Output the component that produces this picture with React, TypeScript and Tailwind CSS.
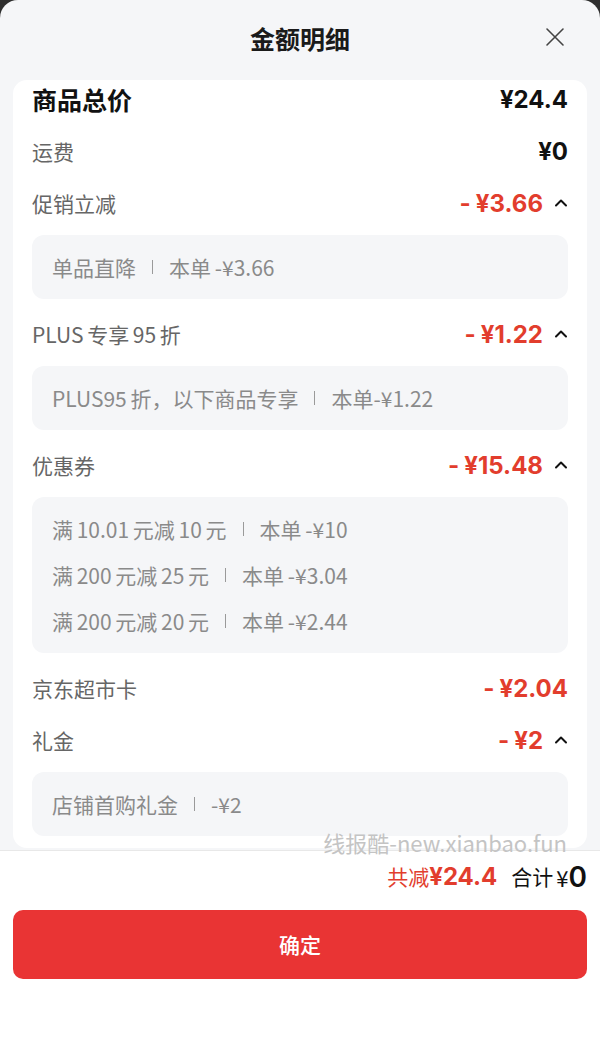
const font = { fontFamily: '"Noto Sans CJK SC", "Noto Sans", sans-serif' };

type Row = {
  label: string;
  amount: string;
  discount?: boolean;
  chevron?: boolean;
  details?: string[][];
};

const rows: Row[] = [
  { label: '运费', amount: '¥0' },
  { label: '促销立减', amount: '¥3.66', discount: true, chevron: true, details: [['单品直降', '本单 -¥3.66']] },
  {
    label: 'PLUS 专享 95 折',
    amount: '¥1.22',
    discount: true,
    chevron: true,
    details: [['PLUS95 折，以下商品专享', '本单-¥1.22']]
  },
  {
    label: '优惠券',
    amount: '¥15.48',
    discount: true,
    chevron: true,
    details: [
      ['满 10.01 元减 10 元', '本单 -¥10'],
      ['满 200 元减 25 元', '本单 -¥3.04'],
      ['满 200 元减 20 元', '本单 -¥2.44']
    ]
  },
  { label: '京东超市卡', amount: '¥2.04', discount: true },
  { label: '礼金', amount: '¥2', discount: true, chevron: true, details: [['店铺首购礼金', '-¥2']] }
];

const Chevron = () => (
  <svg width="14" height="9" viewBox="0 0 14 9" className="mb-[4px] ml-[11px]">
    <path d="M2 7.5 L7 2.5 L12 7.5" fill="none" stroke="#111" strokeWidth="2" strokeLinecap="round" strokeLinejoin="round" />
  </svg>
);

const Amount = ({ row }: { row: Row }) => (
  <div className="flex items-center">
    <span
      className={`text-[24px] font-bold ${row.discount ? 'text-[#e23d2d]' : 'text-[#111]'}`}
      style={{ fontFamily: 'Inter, "Noto Sans CJK SC", sans-serif' }}
    >
      {row.discount && <span className="mr-[5px]">-</span>}
      {row.amount}
    </span>
    {row.chevron && <Chevron />}
  </div>
);

const App = () => {
  return (
    <div className="h-[1037px] w-[600px] bg-[#2e2e2e]" style={font}>
      <div className="relative flex h-full flex-col overflow-hidden rounded-t-[18px] bg-[#f5f6f8]">
        <div className="relative flex h-[80px] shrink-0 items-center justify-center pb-[2px]">
          <h1 className="text-[25px] font-semibold text-[#1a1a1a]">金额明细</h1>
          <svg width="20" height="20" viewBox="0 0 20 20" className="absolute right-[35px] top-[27px]">
            <path d="M2 2 L18 18 M18 2 L2 18" stroke="#444" strokeWidth="1.6" strokeLinecap="round" />
          </svg>
        </div>

        <div className="mx-[13px] rounded-[14px] bg-white px-[19px] pb-[2px]">
          <div className="flex h-[46px] items-center justify-between pb-[6px]">
            <span className="text-[25px] font-bold text-[#111]">商品总价</span>
            <Amount row={{ label: '', amount: '¥24.4' }} />
          </div>

          {rows.map((row) => (
            <div key={row.label}>
              <div className="flex h-[52px] items-center justify-between">
                <span className="text-[21px] text-[#666] [word-spacing:-1px]">{row.label}</span>
                <Amount row={row} />
              </div>
              {row.details && (
                <div className="mb-[10px] mt-[5px] rounded-[12px] bg-[#f5f6f8] px-[20px] py-[9px]">
                  {row.details.map(([left, right]) => (
                    <div
                      key={left}
                      className="flex items-center text-[21px] leading-[46px] text-[#8a8a8a] [word-spacing:-1px]"
                    >
                      <span>{left}</span>
                      <span className="mx-[16px] inline-block h-[14px] w-px bg-[#9a9a9a]" />
                      <span>{right}</span>
                    </div>
                  ))}
                </div>
              )}
            </div>
          ))}
        </div>

        <div className="pointer-events-none absolute right-[33px] top-[826px] text-[22px] text-[#c4c4c4]">
          线报酷-new.xianbao.fun
        </div>

        <div className="mt-[2px] flex flex-1 flex-col border-t border-[#e8e8e8] bg-white px-[13px]">
          <div className="flex h-[52px] items-center justify-end">
            <span className="text-[21px] text-[#e23d2d]">共减</span>
            <span className="text-[24px] font-bold text-[#e23d2d]" style={{ fontFamily: 'Inter, sans-serif' }}>
              ¥24.4
            </span>
            <span className="ml-[14px] text-[21px] text-[#111]">合计</span>
            <span className="ml-[3px] text-[22px] text-[#111]">¥</span>
            <span className="text-[28px] font-semibold text-[#111]" style={{ fontFamily: 'Inter, sans-serif' }}>
              0
            </span>
          </div>
          <button className="mt-[7px] flex h-[69px] w-full items-center justify-center rounded-[10px] bg-[#e93434] text-[21px] font-medium text-white">
            确定
          </button>
        </div>
      </div>
    </div>
  );
};

export default App;
